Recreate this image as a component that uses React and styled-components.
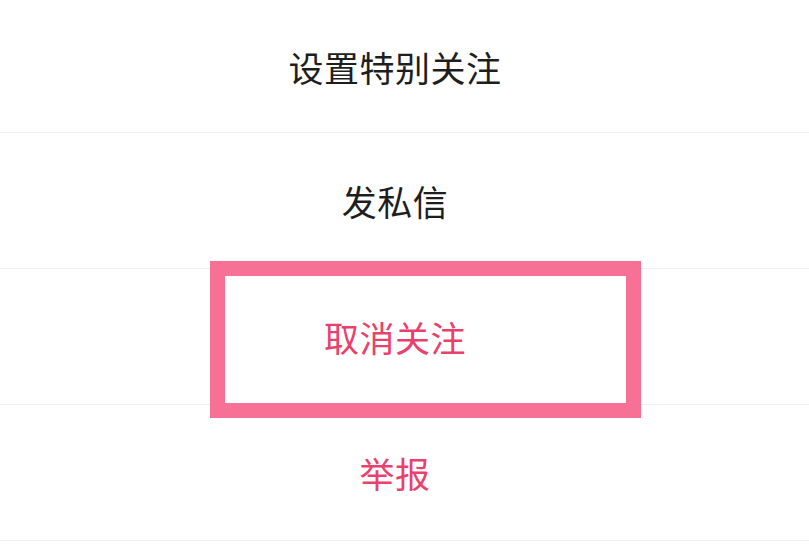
import React from 'react';
import styled, { createGlobalStyle } from 'styled-components';

const GlobalStyle = createGlobalStyle`
  html, body {
    margin: 0;
    padding: 0;
    background: #fff;
  }
  body {
    font-family: "Noto Sans CJK SC", "Noto Sans", sans-serif;
  }
`;

const Sheet = styled.div`
  width: 809px;
  height: 552px;
  overflow: hidden;
  background: #fff;
  display: flex;
  flex-direction: column;
`;

const Row = styled.div`
  position: relative;
  flex-shrink: 0;
  height: ${(p) => p.$height || 135}px;
  display: flex;
  align-items: center;
  justify-content: center;
  padding-right: 19px;
  border-bottom: 1px solid #efefef;
  font-size: 35px;
  letter-spacing: 0.5px;
  color: ${(p) => (p.$danger ? '#e9416c' : '#1e1e1e')};
`;

const Highlight = styled.div`
  position: absolute;
  left: 210px;
  top: -8px;
  width: 431px;
  height: 157px;
  box-sizing: border-box;
  border: 15px solid #f77095;
  pointer-events: none;
`;

const items = [
  { label: '设置特别关注', height: 132 },
  { label: '发私信' },
  { label: '取消关注', danger: true, marked: true },
  { label: '举报', danger: true },
];

const App = () => (
  <>
    <GlobalStyle />
    <Sheet>
      {items.map((item) => (
        <Row key={item.label} $height={item.height} $danger={item.danger}>
          {item.label}
          {item.marked && <Highlight />}
        </Row>
      ))}
    </Sheet>
  </>
);

export default App;
